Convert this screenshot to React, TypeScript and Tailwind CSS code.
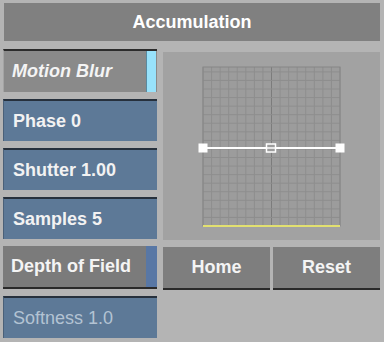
import React from "react";

const font = { fontFamily: '"Liberation Sans", Arial, sans-serif' };

function Field({ label, dim }: { label: string; dim?: boolean }) {
  return (
    <div
      className={`h-[42px] flex items-center pl-[9px] bg-[#5d7997] border-t-2 border-t-[#26303c] border-l border-l-[#4a6078] text-[18px] font-bold ${
        dim ? "text-[#b3c3d3] font-normal" : "text-[#f2f2f2]"
      }`}
    >
      {label}
    </div>
  );
}

function Grid() {
  const w = 137;
  const h = 159;
  const step = w / 16;
  const cols = Array.from({ length: 17 }, (_, i) => i * step);
  const rows = Array.from({ length: Math.floor(h / step) + 1 }, (_, i) => h - i * step);
  return (
    <svg width={149} height={170} viewBox="-6 -5 149 170">
      <rect x={0} y={0} width={w} height={h} fill="#9c9c9c" />
      {cols.map((x, i) => (
        <line key={"c" + i} x1={x} y1={0} x2={x} y2={h} stroke={i === 8 ? "#7c7c7c" : "#8e8e8e"} strokeWidth={1} />
      ))}
      {rows.map((y, i) => (
        <line key={"r" + i} x1={0} y1={y} x2={w} y2={y} stroke="#8e8e8e" strokeWidth={1} />
      ))}
      <rect x={0} y={0} width={w} height={h} fill="none" stroke="#868686" strokeWidth={1} />
      <line x1={0} y1={h} x2={w} y2={h} stroke="#e2e070" strokeWidth={2} />
      <line x1={0} y1={81} x2={w} y2={81} stroke="#ffffff" strokeWidth={2} />
      <rect x={-4.5} y={76.5} width={9} height={9} fill="#ffffff" />
      <rect x={w - 4.5} y={76.5} width={9} height={9} fill="#ffffff" />
      <rect x={63.5} y={77} width={9} height={8} fill="#9c9c9c" stroke="#ffffff" strokeWidth={1.5} />
      <line x1={63.5} y1={81} x2={72.5} y2={81} stroke="#ffffff" strokeWidth={1.5} />
    </svg>
  );
}

export default function App() {
  return (
    <div className="w-[384px] h-[342px] bg-[#b4b4b4] overflow-hidden flex flex-col" style={font}>
      <div className="mx-[4px] mt-[3px] h-[38px] bg-[#808080] flex items-center justify-center text-white text-[18px] font-bold">
        Accumulation
      </div>
      <div className="flex mt-[8px] ml-[3px]">
        <div className="w-[154px] flex flex-col gap-[7px]">
          <div className="h-[43px] flex items-center bg-[#8a8a8a] border-t-2 border-t-[#2c2c2c] border-l border-l-[#a4a4a4] text-[18px] font-bold italic text-[#f4f4f4]">
            <span className="flex-1 pl-[8px]">Motion Blur</span>
            <div className="w-[10px] h-full bg-[#98e2fb] border-l border-l-[#5a8aa0] mr-[1px]" />
          </div>
          <Field label="Phase 0" />
          <Field label="Shutter 1.00" />
          <Field label="Samples 5" />
          <div className="h-[43px] flex items-center bg-[#7b7b7b] border-b-2 border-b-[#2a2a2a] text-[18px] font-bold text-[#f4f4f4]">
            <span className="flex-1 pl-[8px]">Depth of Field</span>
            <div className="w-[11px] h-full bg-[#5877a5]" />
          </div>
          <Field label="Softness 1.0" dim />
        </div>
        <div className="w-[217px] ml-[6px] flex flex-col">
          <div className="mt-[3px] h-[188px] bg-[#a2a2a2] flex justify-center pt-[10px]">
            <Grid />
          </div>
          <div className="mt-[7px] flex gap-[3px]">
            <div className="w-[107px] h-[43px] bg-[#7e7e7e] border-b-2 border-b-[#2a2a2a] flex items-center justify-center text-[18px] font-bold text-[#f4f4f4]">
              Home
            </div>
            <div className="flex-1 h-[43px] bg-[#7e7e7e] border-b-2 border-b-[#2a2a2a] flex items-center justify-center text-[18px] font-bold text-[#f4f4f4]">
              Reset
            </div>
          </div>
        </div>
      </div>
    </div>
  );
}
